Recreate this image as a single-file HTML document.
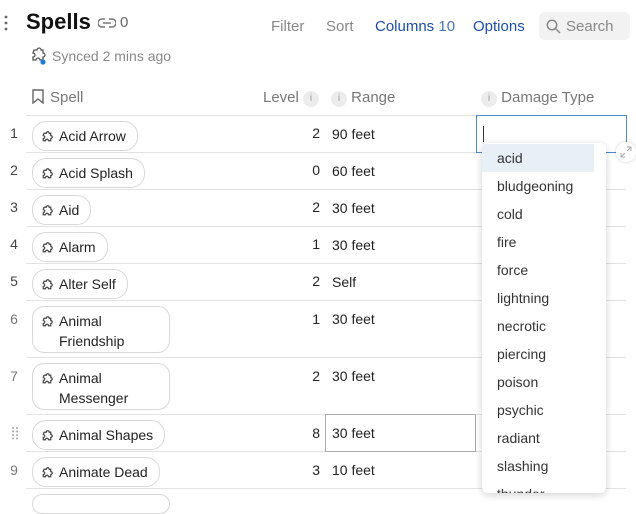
<!DOCTYPE html>
<html><head><style>
*{box-sizing:border-box;margin:0;padding:0}
body{width:636px;height:500px;overflow:hidden;background:#fff;font-family:"Liberation Sans",sans-serif;color:#222;position:relative}
.a{position:absolute;white-space:nowrap}
.hl{position:absolute;left:26px;right:10px;height:1px;background:#e2e2e2}
.num{position:absolute;left:8px;width:12px;text-align:center;font-size:14px;color:#444}
.pill{position:absolute;left:32px;border:1px solid #d8d8d8;border-radius:14px;font-size:14px;padding:4px 11px 4px 26px;line-height:20px;color:#222}
.pill svg{position:absolute;left:8px;top:9px}
.lv{position:absolute;right:316px;font-size:14px}
.rg{position:absolute;left:332px;font-size:14px}
.ic{display:inline-block;width:16px;height:16px;border-radius:8px;background:#ececec;color:#999;font-size:10px;text-align:center;line-height:16px;vertical-align:1px}
.dd{position:absolute;left:482px;top:143px;width:124px;height:350px;background:#fff;border-radius:6px;box-shadow:0 2px 8px rgba(0,0,0,.18);overflow:hidden}
.dd div{height:28px;line-height:28px;padding-left:15px;font-size:14px;color:#333;width:112px}
</style></head><body>
<svg class="a" style="left:4px;top:15px" width="4" height="16"><circle cx="2" cy="2" r="1.4" fill="#666"/><circle cx="2" cy="8" r="1.4" fill="#666"/><circle cx="2" cy="14" r="1.4" fill="#666"/></svg>
<div class="a" style="left:26px;top:9px;font-size:22px;font-weight:bold;color:#111">Spells</div>
<svg class="a" style="left:98px;top:17px" width="18" height="12" viewBox="0 0 18 12"><path d="M7 2H4a4 4 0 000 8h3M11 2h3a4 4 0 010 8h-3M5 6h8" stroke="#777" stroke-width="1.5" fill="none"/></svg>
<div class="a" style="left:120px;top:14px;font-size:15px;color:#666">0</div>
<div class="a" style="left:271px;top:18px;font-size:15px;color:#888">Filter</div>
<div class="a" style="left:326px;top:18px;font-size:15px;color:#888">Sort</div>
<div class="a" style="left:375px;top:18px;font-size:15px;color:#1b4ea8">Columns <span style="color:#4a70b8">10</span></div>
<div class="a" style="left:473px;top:18px;font-size:15px;color:#1b4ea8">Options</div>
<div class="a" style="left:539px;top:12px;width:91px;height:28px;background:#f2f2f2;border-radius:6px"></div>
<svg class="a" style="left:546px;top:19px" width="15" height="15" viewBox="0 0 15 15"><circle cx="6" cy="6" r="4.7" stroke="#888" stroke-width="1.5" fill="none"/><path d="M9.5 9.5L14 14" stroke="#888" stroke-width="1.5"/></svg>
<div class="a" style="left:566px;top:18px;font-size:15px;color:#888">Search</div>
<svg class="a" style="left:30px;top:47px" width="16" height="18" viewBox="0 0 16 18"><path d="M4 3h3a2 2 0 014 0h2v3a2 2 0 010 4v3h-3a2 2 0 00-4 0H3v-3a2 2 0 000-4z" stroke="#555" stroke-width="1.3" fill="none"/><circle cx="13" cy="15" r="2.6" fill="#1f7ad6"/></svg>
<div class="a" style="left:52px;top:48px;font-size:14px;color:#888">Synced 2 mins ago</div>
<svg class="a" style="left:32px;top:89px" width="12" height="15" viewBox="0 0 12 15"><path d="M1 1h10v13l-5-4-5 4z" stroke="#666" stroke-width="1.4" fill="none"/></svg>
<div class="a" style="left:50px;top:89px;font-size:15px;color:#777">Spell</div>
<div class="a" style="left:263px;top:89px;font-size:15px;color:#777">Level <span class="ic">i</span></div>
<div class="a" style="left:331px;top:89px;font-size:15px;color:#777"><span class="ic">i</span> Range</div>
<div class="a" style="left:481px;top:89px;font-size:15px;color:#777"><span class="ic">i</span> Damage Type</div>
<div class="hl" style="top:115px"></div><div class="hl" style="top:152px"></div><div class="hl" style="top:189px"></div><div class="hl" style="top:226px"></div><div class="hl" style="top:263px"></div><div class="hl" style="top:300px"></div><div class="hl" style="top:357px"></div><div class="hl" style="top:414px"></div><div class="hl" style="top:451px"></div><div class="hl" style="top:488px"></div>

<div class="num" style="top:125px">1</div><div class="pill" style="top:121px"><svg width="12" height="12" viewBox="0 0 16 16"><path d="M4 3h3a2 2 0 014 0h2v3a2 2 0 010 4v3h-3a2 2 0 00-4 0H3v-3a2 2 0 000-4z" stroke="#444" stroke-width="1.6" fill="none"/></svg>Acid Arrow</div><div class="lv" style="top:125px">2</div><div class="rg" style="top:126px">90 feet</div>
<div class="num" style="top:162px">2</div><div class="pill" style="top:158px"><svg width="12" height="12" viewBox="0 0 16 16"><path d="M4 3h3a2 2 0 014 0h2v3a2 2 0 010 4v3h-3a2 2 0 00-4 0H3v-3a2 2 0 000-4z" stroke="#444" stroke-width="1.6" fill="none"/></svg>Acid Splash</div><div class="lv" style="top:162px">0</div><div class="rg" style="top:163px">60 feet</div>
<div class="num" style="top:199px">3</div><div class="pill" style="top:195px"><svg width="12" height="12" viewBox="0 0 16 16"><path d="M4 3h3a2 2 0 014 0h2v3a2 2 0 010 4v3h-3a2 2 0 00-4 0H3v-3a2 2 0 000-4z" stroke="#444" stroke-width="1.6" fill="none"/></svg>Aid</div><div class="lv" style="top:199px">2</div><div class="rg" style="top:200px">30 feet</div>
<div class="num" style="top:236px">4</div><div class="pill" style="top:232px"><svg width="12" height="12" viewBox="0 0 16 16"><path d="M4 3h3a2 2 0 014 0h2v3a2 2 0 010 4v3h-3a2 2 0 00-4 0H3v-3a2 2 0 000-4z" stroke="#444" stroke-width="1.6" fill="none"/></svg>Alarm</div><div class="lv" style="top:236px">1</div><div class="rg" style="top:237px">30 feet</div>
<div class="num" style="top:273px">5</div><div class="pill" style="top:269px"><svg width="12" height="12" viewBox="0 0 16 16"><path d="M4 3h3a2 2 0 014 0h2v3a2 2 0 010 4v3h-3a2 2 0 00-4 0H3v-3a2 2 0 000-4z" stroke="#444" stroke-width="1.6" fill="none"/></svg>Alter Self</div><div class="lv" style="top:273px">2</div><div class="rg" style="top:274px">Self</div>
<div class="num" style="top:311px;color:#777">6</div><div class="pill" style="top:306px;width:138px;height:47px;white-space:normal;border-radius:12px"><svg width="12" height="12" viewBox="0 0 16 16"><path d="M4 3h3a2 2 0 014 0h2v3a2 2 0 010 4v3h-3a2 2 0 00-4 0H3v-3a2 2 0 000-4z" stroke="#444" stroke-width="1.6" fill="none"/></svg>Animal Friendship</div><div class="lv" style="top:311px">1</div><div class="rg" style="top:311px">30 feet</div>
<div class="num" style="top:368px;color:#777">7</div><div class="pill" style="top:363px;width:138px;height:47px;white-space:normal;border-radius:12px"><svg width="12" height="12" viewBox="0 0 16 16"><path d="M4 3h3a2 2 0 014 0h2v3a2 2 0 010 4v3h-3a2 2 0 00-4 0H3v-3a2 2 0 000-4z" stroke="#444" stroke-width="1.6" fill="none"/></svg>Animal Messenger</div><div class="lv" style="top:368px">2</div><div class="rg" style="top:368px">30 feet</div>
<svg class="a" style="left:11px;top:426px" width="8" height="14"><g fill="#aaa"><circle cx="2" cy="2" r="1"/><circle cx="6" cy="2" r="1"/><circle cx="2" cy="5.5" r="1"/><circle cx="6" cy="5.5" r="1"/><circle cx="2" cy="9" r="1"/><circle cx="6" cy="9" r="1"/><circle cx="2" cy="12.5" r="1"/><circle cx="6" cy="12.5" r="1"/></g></svg>
<div class="pill" style="top:420px"><svg width="12" height="12" viewBox="0 0 16 16"><path d="M4 3h3a2 2 0 014 0h2v3a2 2 0 010 4v3h-3a2 2 0 00-4 0H3v-3a2 2 0 000-4z" stroke="#444" stroke-width="1.6" fill="none"/></svg>Animal Shapes</div><div class="lv" style="top:425px">8</div>
<div class="a" style="left:325px;top:414px;width:151px;height:38px;border:1px solid #aaa"></div><div class="rg" style="top:425px">30 feet</div>
<div class="num" style="top:462px;color:#777">9</div><div class="pill" style="top:457px"><svg width="12" height="12" viewBox="0 0 16 16"><path d="M4 3h3a2 2 0 014 0h2v3a2 2 0 010 4v3h-3a2 2 0 00-4 0H3v-3a2 2 0 000-4z" stroke="#444" stroke-width="1.6" fill="none"/></svg>Animate Dead</div><div class="lv" style="top:462px">3</div><div class="rg" style="top:462px">10 feet</div>
<div class="pill" style="top:494px;width:138px;height:20px"></div>

<div class="a" style="left:476px;top:115px;width:151px;height:38px;border:1px solid #4a8ad0;background:#fff"></div>
<div class="a" style="left:483px;top:126px;width:1px;height:16px;background:#333"></div>
<div class="a" style="left:616px;top:142px;width:20px;height:20px;border-radius:10px;background:#fff;box-shadow:0 0 3px rgba(0,0,0,.2)"></div>
<svg class="a" style="left:620px;top:146px" width="12" height="12" viewBox="0 0 12 12"><path d="M7 1h4v4M11 1L7 5M5 11H1V7M1 11l4-4" stroke="#aaa" stroke-width="1" fill="none"/></svg>
<div class="dd">
<div style="background:#e8eff7;margin-top:1px">acid</div><div>bludgeoning</div><div>cold</div><div>fire</div><div>force</div><div>lightning</div><div>necrotic</div><div>piercing</div><div>poison</div><div>psychic</div><div>radiant</div><div>slashing</div><div>thunder</div>
</div>
</body></html>
